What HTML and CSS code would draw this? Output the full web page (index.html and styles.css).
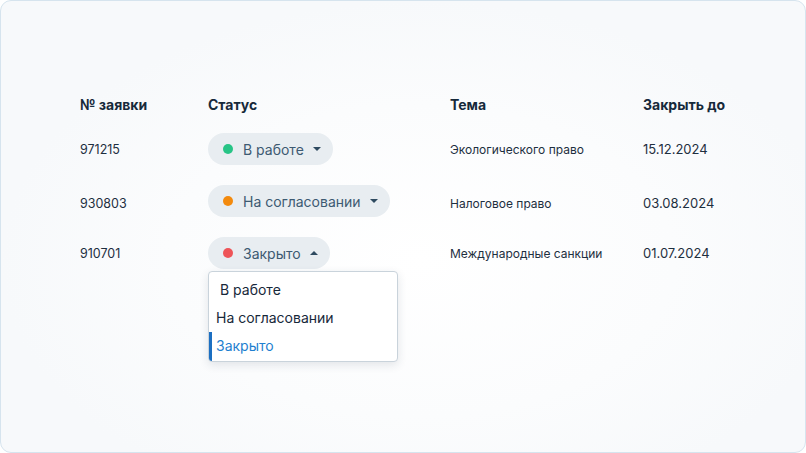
FILE: index.html
```html
<!DOCTYPE html>
<html lang="ru">
<head>
<meta charset="utf-8">
<title>Заявки</title>
<link rel="stylesheet" href="styles.css">
</head>
<body>
<div class="card">
  <div class="table">
    <div class="row head">
      <div>№ заявки</div>
      <div>Статус</div>
      <div>Тема</div>
      <div>Закрыть до</div>
    </div>
    <div class="row r1">
      <div class="num">971215</div>
      <div><span class="pill"><span class="dot green"></span>В работе<span class="caret down"></span></span></div>
      <div class="topic">Экологического право</div>
      <div class="date">15.12.2024</div>
    </div>
    <div class="row r2">
      <div class="num">930803</div>
      <div><span class="pill"><span class="dot orange"></span>На согласовании<span class="caret down"></span></span></div>
      <div class="topic">Налоговое право</div>
      <div class="date">03.08.2024</div>
    </div>
    <div class="row r3">
      <div class="num">910701</div>
      <div class="wrap">
        <span class="pill"><span class="dot red"></span>Закрыто<span class="caret up"></span></span>
        <div class="menu">
          <div class="item first">В работе</div>
          <div class="item">На согласовании</div>
          <div class="item active">Закрыто</div>
        </div>
      </div>
      <div class="topic">Международные санкции</div>
      <div class="date">01.07.2024</div>
    </div>
  </div>
</div>
</body>
</html>
```
FILE: styles.css
```css
* { box-sizing: border-box; }
html, body { margin: 0; padding: 0; }
body {
  width: 806px;
  height: 453px;
  font-family: Inter, "Noto Sans", sans-serif;
  color: #172b3d;
  background: #ffffff;
}
.card {
  width: 806px;
  height: 453px;
  border: 1px solid #d6e4ee;
  border-radius: 11px;
  background: radial-gradient(ellipse 420px 260px at 420px 260px, #ffffff 0%, #fbfcfd 60%, #f7f9fb 100%);
  padding: 93px 0 0 79px;
}
.row {
  display: grid;
  grid-template-columns: 128px 242px 193px 140px;
  align-items: center;
}
.head {
  font-size: 14px;
  font-weight: 700;
  height: 20px;
  color: #16293a;
}
.r1 { margin-top: 19px; height: 32px; }
.r2 { margin-top: 20px; height: 32px; }
.r3 { margin-top: 20px; height: 32px; }
.num { font-size: 12.5px; color: #1e2f3f; }
.r2 .num { transform: translateY(2px); }
.topic { font-size: 12px; color: #1e2f3f; }
.r2 .topic { transform: translateY(2px); }
.date { font-size: 13px; color: #1e2f3f; }
.r2 .date { transform: translateY(2px); }
.pill {
  display: inline-flex;
  align-items: center;
  height: 32px;
  padding: 0 12px 0 15px;
  border-radius: 16px;
  background: #e8edf1;
  font-size: 14px;
  color: #3d5a72;
}
.dot {
  width: 10px;
  height: 10px;
  border-radius: 50%;
  margin-right: 10px;
}
.green { background: #27c486; }
.orange { background: #f38a0d; }
.red { background: #ee5458; }
.caret {
  width: 0;
  height: 0;
  margin-left: 9px;
  border-left: 4px solid transparent;
  border-right: 4px solid transparent;
}
.caret.down { border-top: 4px solid #2e4a60; }
.caret.up { border-bottom: 4px solid #2e4a60; }
.wrap { position: relative; }
.menu {
  position: absolute;
  top: 34px;
  left: 0;
  width: 190px;
  height: 91px;
  background: #ffffff;
  border: 1px solid #c9d3db;
  border-radius: 4px;
  box-shadow: 0 3px 10px rgba(30, 50, 70, 0.12);
  padding-top: 4px;
  overflow: hidden;
}
.item {
  height: 28px;
  line-height: 28px;
  font-size: 14px;
  color: #17283a;
  padding-left: 4px;
  border-left: 3px solid transparent;
}
.item.first { padding-left: 8px; }
.item.active {
  color: #1f7fd0;
  border-left-color: #1c6fc2;
  height: 30px;
  line-height: 28px;
}
```
